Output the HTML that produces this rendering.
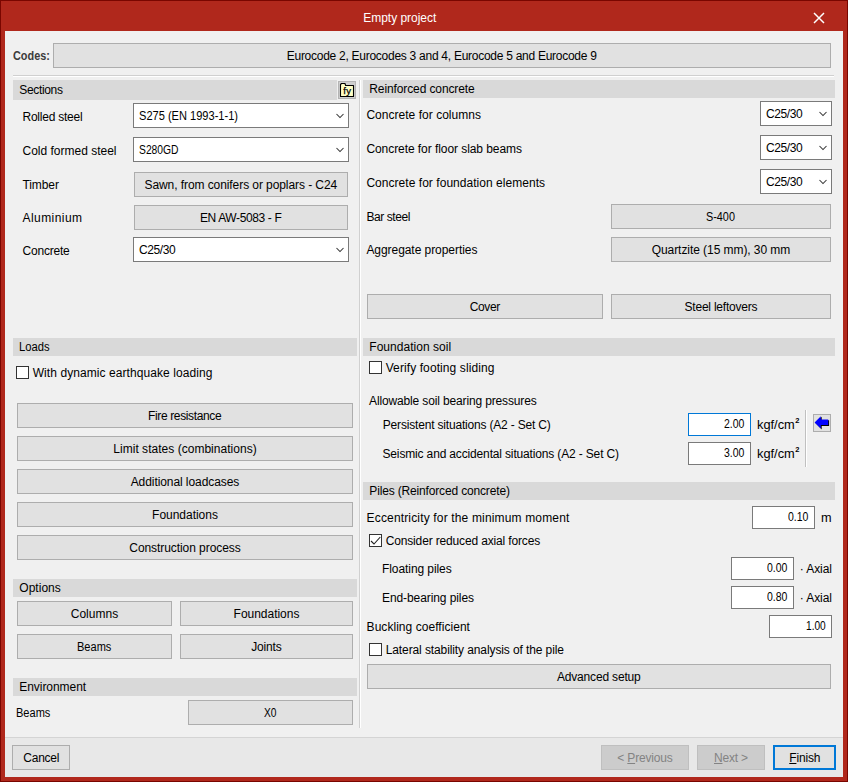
<!DOCTYPE html><html><head><meta charset="utf-8"><title>Empty project</title><style>
html,body{margin:0;padding:0}
body{width:848px;height:782px;overflow:hidden;background:#b0281c;position:relative;font-family:"Liberation Sans", sans-serif;font-size:12px;color:#000}
#frame{position:absolute;left:0;top:0;width:846px;height:780px;border:1px solid #790600;}
#content{position:absolute;left:5px;top:31px;width:838px;height:746px;background:#f0f0f0}
.abs,.btn,.combo,.inp,.hdr,.chk,.sepg,.sepw,.sepg2,.sepg3,.icobtn,.t{position:absolute;box-sizing:border-box}
.btn{background:#e1e1e1;border:1px solid #adadad}
.btn.dis{background:#cccccc;border-color:#bfbfbf}
.btn.def{border:2px solid #0078d7}
.combo{background:#fff;border:1px solid #7a7a7a}
.inp{background:#fff;border:1px solid #7a7a7a}
.inp.foc{border-color:#0078d7}
.hdr{background:#d9d9d9}
.chk{background:#fff;border:1px solid #333}
.botbar{position:absolute;background:#e8e8e8}
.sepg{background:#d0d0d0} .sepw{background:#fff} .sepg2{background:#d4d4d4} .sepg3{background:#c0c0c0}
.icobtn{background:#cfcfcf;border:1px solid #b4b4b4}
.t{white-space:nowrap;line-height:16px;height:16px}
.t.b{font-weight:bold}
.t.dis{color:#838383}
.sup{font-size:7px;font-weight:bold;position:relative;top:-5.8px;letter-spacing:0;margin-left:0.6px}
.dot{margin:0 -0.45px}
</style></head><body><div id="frame"></div><div id="content"></div><svg class="abs" style="left:813px;top:12px" width="12" height="12" viewBox="0 0 12 12"><path d="M1 1 L11 11 M11 1 L1 11" stroke="#fff" stroke-width="1.45" fill="none"/></svg>
<div class="btn" style="left:53px;top:43px;width:778px;height:25px;"></div>
<div class="sepg" style="left:13px;top:75px;width:821px;height:1px;"></div>
<div class="sepw" style="left:13px;top:76px;width:821px;height:1px;"></div>
<div class="sepg" style="left:359px;top:80px;width:1px;height:648px;"></div>
<div class="sepw" style="left:360px;top:80px;width:1px;height:648px;"></div>
<div class="botbar" style="left:5px;top:738px;width:838px;height:39px;"></div>
<div class="sepg2" style="left:5px;top:737px;width:838px;height:1px;"></div>
<div class="hdr" style="left:13px;top:80px;width:324px;height:20px;"></div>
<div class="icobtn" style="left:338px;top:81px;width:18px;height:18px;"></div>
<svg class="abs" style="left:338px;top:81px" width="18" height="18" viewBox="0 0 18 18">
<path d="M2.5 15.5 V3.5 L3.5 2.5 H7 L7.6 4.5 H15.5 V15.5 Z" fill="#ffffc6" stroke="#000" stroke-width="1.1" stroke-linejoin="round"/>
<text x="5.2" y="13.4" font-family="Liberation Sans, sans-serif" font-size="9.5" fill="#000" stroke="#000" stroke-width="0.25" letter-spacing="0.5">fy</text></svg>
<div class="combo" style="left:133px;top:103px;width:216px;height:25px;"></div>
<svg class="abs" style="left:335px;top:113px" width="10" height="6" viewBox="0 0 10 6"><path d="M1.5 1 L5 4.5 L8.5 1" fill="none" stroke="#333" stroke-width="1.05"/></svg>
<div class="combo" style="left:133px;top:137px;width:216px;height:25px;"></div>
<svg class="abs" style="left:335px;top:147px" width="10" height="6" viewBox="0 0 10 6"><path d="M1.5 1 L5 4.5 L8.5 1" fill="none" stroke="#333" stroke-width="1.05"/></svg>
<div class="btn" style="left:134px;top:172px;width:214px;height:25px;"></div>
<div class="btn" style="left:134px;top:205px;width:214px;height:25px;"></div>
<div class="combo" style="left:133px;top:237px;width:216px;height:25px;"></div>
<svg class="abs" style="left:335px;top:247px" width="10" height="6" viewBox="0 0 10 6"><path d="M1.5 1 L5 4.5 L8.5 1" fill="none" stroke="#333" stroke-width="1.05"/></svg>
<div class="hdr" style="left:13px;top:338px;width:344px;height:18px;"></div>
<div class="chk" style="left:16px;top:366px;width:13px;height:13px;"></div>
<div class="btn" style="left:17px;top:403px;width:336px;height:25px;"></div>
<div class="btn" style="left:17px;top:436px;width:336px;height:25px;"></div>
<div class="btn" style="left:17px;top:469px;width:336px;height:25px;"></div>
<div class="btn" style="left:17px;top:502px;width:336px;height:25px;"></div>
<div class="btn" style="left:17px;top:535px;width:336px;height:25px;"></div>
<div class="hdr" style="left:13px;top:579px;width:344px;height:18px;"></div>
<div class="btn" style="left:17px;top:601px;width:155px;height:25px;"></div>
<div class="btn" style="left:180px;top:601px;width:173px;height:25px;"></div>
<div class="btn" style="left:17px;top:634px;width:155px;height:25px;"></div>
<div class="btn" style="left:180px;top:634px;width:173px;height:25px;"></div>
<div class="hdr" style="left:13px;top:678px;width:344px;height:18px;"></div>
<div class="btn" style="left:188px;top:700px;width:165px;height:25px;"></div>
<div class="hdr" style="left:363px;top:80px;width:472px;height:18px;"></div>
<div class="combo" style="left:760px;top:101px;width:72px;height:25px;"></div>
<svg class="abs" style="left:818px;top:111px" width="10" height="6" viewBox="0 0 10 6"><path d="M1.5 1 L5 4.5 L8.5 1" fill="none" stroke="#333" stroke-width="1.05"/></svg>
<div class="combo" style="left:760px;top:135px;width:72px;height:25px;"></div>
<svg class="abs" style="left:818px;top:145px" width="10" height="6" viewBox="0 0 10 6"><path d="M1.5 1 L5 4.5 L8.5 1" fill="none" stroke="#333" stroke-width="1.05"/></svg>
<div class="combo" style="left:760px;top:169px;width:72px;height:25px;"></div>
<svg class="abs" style="left:818px;top:179px" width="10" height="6" viewBox="0 0 10 6"><path d="M1.5 1 L5 4.5 L8.5 1" fill="none" stroke="#333" stroke-width="1.05"/></svg>
<div class="btn" style="left:611px;top:204px;width:220px;height:25px;"></div>
<div class="btn" style="left:611px;top:237px;width:220px;height:25px;"></div>
<div class="btn" style="left:367px;top:294px;width:236px;height:25px;"></div>
<div class="btn" style="left:611px;top:294px;width:220px;height:25px;"></div>
<div class="hdr" style="left:363px;top:338px;width:472px;height:18px;"></div>
<div class="chk" style="left:369px;top:361px;width:13px;height:13px;"></div>
<div class="inp foc" style="left:688px;top:413px;width:63px;height:23px;"></div>
<div class="inp" style="left:688px;top:442px;width:63px;height:23px;"></div>
<div class="sepg3" style="left:805px;top:410px;width:1px;height:57px;"></div>
<div class="sepw" style="left:806px;top:410px;width:1px;height:57px;"></div>
<div class="btn" style="left:813px;top:414px;width:18px;height:18px;"></div>
<svg class="abs" style="left:813px;top:414px" width="18" height="18" viewBox="0 0 18 18">
<path d="M2.4 9.1 L8.7 2.8 V6.2 H16.1 V12 H8.7 V15.5 Z" fill="#000"/>
<path d="M1.6 8.4 L7.8 2.2 V5.6 H15.2 V11.1 H7.8 V14.6 Z" fill="#0000ff"/></svg>
<div class="hdr" style="left:363px;top:482px;width:472px;height:18px;"></div>
<div class="inp" style="left:752px;top:506px;width:63px;height:23px;"></div>
<div class="chk" style="left:369px;top:534px;width:13px;height:13px;"></div>
<svg class="abs" style="left:369px;top:534px" width="13" height="13" viewBox="0 0 13 13"><path d="M2 7 L5 10 L11.3 3" fill="none" stroke="#222" stroke-width="1.1"/></svg>
<div class="inp" style="left:731px;top:557px;width:63px;height:23px;"></div>
<div class="inp" style="left:731px;top:586px;width:63px;height:23px;"></div>
<div class="inp" style="left:769px;top:615px;width:63px;height:23px;"></div>
<div class="chk" style="left:369px;top:643px;width:13px;height:13px;"></div>
<div class="btn" style="left:367px;top:664px;width:464px;height:25px;"></div>
<div class="btn" style="left:12px;top:745px;width:58px;height:25px;"></div>
<div class="btn dis" style="left:601px;top:745px;width:88px;height:25px;"></div>
<div class="btn dis" style="left:697px;top:745px;width:68px;height:25px;"></div>
<div class="btn def" style="left:773px;top:745px;width:63px;height:25px;"></div>
<div class="t " id="t0" style="letter-spacing:-0.035px;color:#fff;left:363.30px;top:10px">Empty project</div>
<div class="t b" id="t1" style="color:#3c3c3c;left:13.00px;top:48px;transform:scaleX(0.907);transform-origin:0 0">Codes:</div>
<div class="t " id="t2" style="letter-spacing:-0.268px;left:286.75px;top:48px">Eurocode 2, Eurocodes 3 and 4, Eurocode 5 and Eurocode 9</div>
<div class="t " id="t3" style="letter-spacing:-0.346px;left:19.30px;top:82px">Sections</div>
<div class="t " id="t4" style="letter-spacing:-0.240px;left:22.50px;top:109px">Rolled steel</div>
<div class="t " id="t5" style="letter-spacing:-0.005px;left:22.50px;top:143px">Cold formed steel</div>
<div class="t " id="t6" style="letter-spacing:-0.099px;left:22.50px;top:177px">Timber</div>
<div class="t " id="t7" style="letter-spacing:0.435px;left:22.50px;top:210px">Aluminium</div>
<div class="t " id="t8" style="letter-spacing:-0.203px;left:22.50px;top:243px">Concrete</div>
<div class="t " id="t9" style="left:139.00px;top:108px;transform:scaleX(0.922);transform-origin:0 0">S275 (EN 1993-1-1)</div>
<div class="t " id="t10" style="left:139.00px;top:142px;transform:scaleX(0.859);transform-origin:0 0">S280GD</div>
<div class="t " id="t11" style="letter-spacing:-0.078px;left:144.50px;top:177px">Sawn, from conifers or poplars - C24</div>
<div class="t " id="t12" style="letter-spacing:-0.379px;left:199.95px;top:210px">EN AW-5083 - F</div>
<div class="t " id="t13" style="letter-spacing:-0.404px;left:139.00px;top:242px">C25/30</div>
<div class="t " id="t14" style="left:19.30px;top:339px;transform:scaleX(0.936);transform-origin:0 0">Loads</div>
<div class="t " id="t15" style="letter-spacing:0.075px;left:32.70px;top:365px">With dynamic earthquake loading</div>
<div class="t " id="t16" style="letter-spacing:-0.373px;left:148.10px;top:408px">Fire resistance</div>
<div class="t " id="t17" style="letter-spacing:0.026px;left:113.30px;top:441px">Limit states (combinations)</div>
<div class="t " id="t18" style="letter-spacing:-0.078px;left:130.70px;top:474px">Additional loadcases</div>
<div class="t " id="t19" style="letter-spacing:-0.025px;left:152.10px;top:507px">Foundations</div>
<div class="t " id="t20" style="letter-spacing:-0.069px;left:129.30px;top:540px">Construction process</div>
<div class="t " id="t21" style="letter-spacing:0.024px;left:19.30px;top:580px">Options</div>
<div class="t " id="t22" style="letter-spacing:0.042px;left:70.70px;top:606px">Columns</div>
<div class="t " id="t23" style="letter-spacing:-0.025px;left:233.60px;top:606px">Foundations</div>
<div class="t " id="t24" style="left:77.30px;top:639px;transform:scaleX(0.921);transform-origin:0 0">Beams</div>
<div class="t " id="t25" style="letter-spacing:-0.150px;left:251.20px;top:639px">Joints</div>
<div class="t " id="t26" style="letter-spacing:-0.053px;left:19.30px;top:679px">Environment</div>
<div class="t " id="t27" style="left:16.30px;top:705px;transform:scaleX(0.921);transform-origin:0 0">Beams</div>
<div class="t " id="t28" style="left:264.10px;top:705px;transform:scaleX(0.853);transform-origin:0 0">X0</div>
<div class="t " id="t29" style="letter-spacing:-0.112px;left:369.30px;top:81px">Reinforced concrete</div>
<div class="t " id="t30" style="letter-spacing:0.029px;left:366.40px;top:107px">Concrete for columns</div>
<div class="t " id="t31" style="letter-spacing:-0.404px;left:766.00px;top:106px">C25/30</div>
<div class="t " id="t32" style="letter-spacing:-0.065px;left:366.40px;top:141px">Concrete for floor slab beams</div>
<div class="t " id="t33" style="letter-spacing:-0.404px;left:766.00px;top:140px">C25/30</div>
<div class="t " id="t34" style="letter-spacing:0.041px;left:366.40px;top:175px">Concrete for foundation elements</div>
<div class="t " id="t35" style="letter-spacing:-0.404px;left:766.00px;top:174px">C25/30</div>
<div class="t " id="t36" style="letter-spacing:-0.411px;left:366.40px;top:209px">Bar steel</div>
<div class="t " id="t37" style="left:706.40px;top:209px;transform:scaleX(0.903);transform-origin:0 0">S-400</div>
<div class="t " id="t38" style="letter-spacing:-0.056px;left:366.40px;top:242px">Aggregate properties</div>
<div class="t " id="t39" style="letter-spacing:-0.062px;left:651.70px;top:242px">Quartzite (15 mm), 30 mm</div>
<div class="t " id="t40" style="letter-spacing:-0.378px;left:469.75px;top:299px">Cover</div>
<div class="t " id="t41" style="letter-spacing:-0.224px;left:684.55px;top:299px">Steel leftovers</div>
<div class="t " id="t42" style="letter-spacing:0.034px;left:369.30px;top:339px">Foundation soil</div>
<div class="t " id="t43" style="letter-spacing:0.093px;left:385.70px;top:360px">Verify footing sliding</div>
<div class="t " id="t44" style="letter-spacing:-0.145px;left:369.10px;top:393px">Allowable soil bearing pressures</div>
<div class="t " id="t45" style="letter-spacing:-0.184px;left:382.80px;top:417px">Persistent situations (A2 - Set C)</div>
<div class="t " id="t46" style="letter-spacing:-0.154px;left:382.50px;top:446px">Seismic and accidental situations (A2 - Set C)</div>
<div class="t " id="t47" style="left:724.10px;top:416px;transform:scaleX(0.874);transform-origin:0 0">2.00</div>
<div class="t " id="t48" style="left:724.10px;top:445px;transform:scaleX(0.874);transform-origin:0 0">3.00</div>
<div class="t " id="t49" style="left:756.90px;top:417px;transform:scaleX(1.067);transform-origin:0 0">kgf/cm<span class="sup">2</span></div>
<div class="t " id="t50" style="left:756.90px;top:446px;transform:scaleX(1.067);transform-origin:0 0">kgf/cm<span class="sup">2</span></div>
<div class="t " id="t51" style="letter-spacing:-0.159px;left:369.30px;top:483px">Piles (Reinforced concrete)</div>
<div class="t " id="t52" style="letter-spacing:0.157px;left:366.60px;top:510px">Eccentricity for the minimum moment</div>
<div class="t " id="t53" style="left:788.10px;top:509px;transform:scaleX(0.874);transform-origin:0 0">0.10</div>
<div class="t " id="t54" style="left:821.40px;top:510px;transform:scaleX(1.060);transform-origin:0 0">m</div>
<div class="t " id="t55" style="letter-spacing:-0.152px;left:385.70px;top:533px">Consider reduced axial forces</div>
<div class="t " id="t56" style="letter-spacing:-0.077px;left:382.00px;top:561px">Floating piles</div>
<div class="t " id="t57" style="left:767.10px;top:560px;transform:scaleX(0.874);transform-origin:0 0">0.00</div>
<div class="t " id="t58" style="letter-spacing:-0.062px;left:799.70px;top:561px">· Axial</div>
<div class="t " id="t59" style="letter-spacing:-0.087px;left:382.00px;top:590px">End-bearing piles</div>
<div class="t " id="t60" style="left:767.10px;top:589px;transform:scaleX(0.874);transform-origin:0 0">0.80</div>
<div class="t " id="t61" style="letter-spacing:-0.062px;left:799.70px;top:590px">· Axial</div>
<div class="t " id="t62" style="letter-spacing:0.044px;left:366.60px;top:619px">Buckling coefficient</div>
<div class="t " id="t63" style="left:805.80px;top:618px;transform:scaleX(0.845);transform-origin:0 0">1.00</div>
<div class="t " id="t64" style="letter-spacing:-0.103px;left:385.70px;top:642px">Lateral stability analysis of the pile</div>
<div class="t " id="t65" style="letter-spacing:-0.168px;left:556.90px;top:669px">Advanced setup</div>
<div class="t " id="t66" style="letter-spacing:-0.278px;left:23.35px;top:750px">Cancel</div>
<div class="t dis" id="t67" style="letter-spacing:-0.192px;left:617.35px;top:750px">&lt; <u>P</u>revious</div>
<div class="t dis" id="t68" style="letter-spacing:-0.202px;left:714.00px;top:750px"><u>N</u>ext &gt;</div>
<div class="t " id="t69" style="letter-spacing:-0.167px;left:789.25px;top:750px"><u>F</u>inish</div></body></html>
